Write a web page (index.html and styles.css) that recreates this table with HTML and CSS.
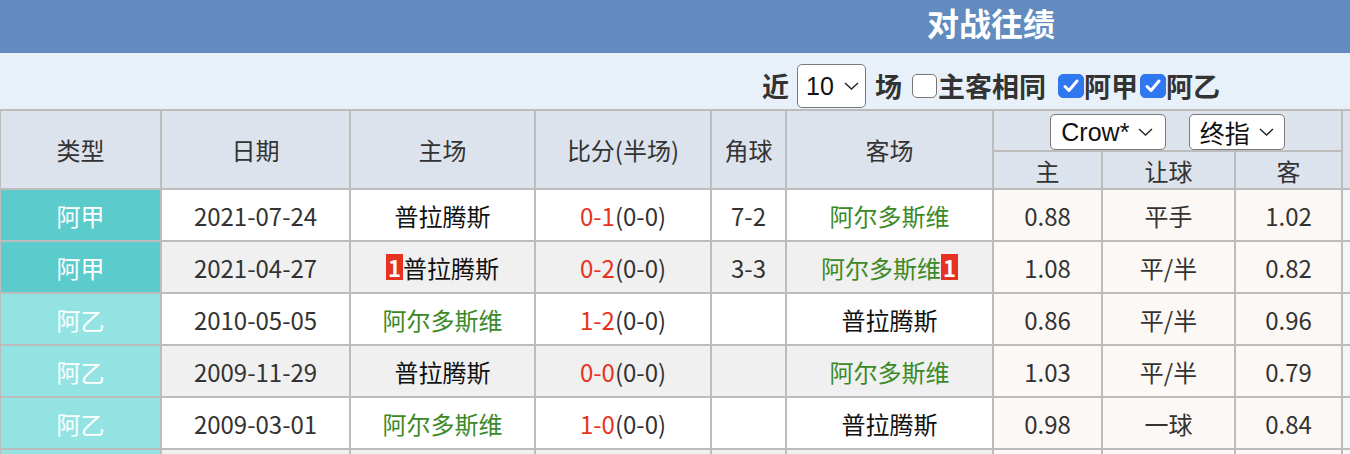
FILE: index.html
```html
<!DOCTYPE html>
<html lang="zh-CN">
<head>
<meta charset="utf-8">
<title>对战往绩</title>
<link rel="stylesheet" href="styles.css">
</head>
<body>
<div class="page">
  <div class="title-bar"><h2 class="title">对战往绩</h2></div>
  <div class="filter-bar">
    <span class="flabel">近</span>
    <span class="sel sel-count">10<svg class="chev" width="15" height="8" viewBox="0 0 15 8"><polyline points="1,1 7.5,7 14,1" fill="none" stroke="#222" stroke-width="1.4"/></svg></span>
    <span class="flabel gap-l">场</span>
    <span class="cb gap-cb"></span><span class="flabel">主客相同</span>
    <span class="cb checked gap-cb2"><svg width="18" height="16" viewBox="0 0 18 16"><polyline points="3,8.5 7,12.5 15,3" fill="none" stroke="#fff" stroke-width="3" stroke-linecap="round" stroke-linejoin="round"/></svg></span><span class="flabel">阿甲</span>
    <span class="cb checked gap-cb3"><svg width="18" height="16" viewBox="0 0 18 16"><polyline points="3,8.5 7,12.5 15,3" fill="none" stroke="#fff" stroke-width="3" stroke-linecap="round" stroke-linejoin="round"/></svg></span><span class="flabel">阿乙</span>
  </div>
  <table class="records">
    <colgroup>
      <col class="c-type"><col class="c-date"><col class="c-home"><col class="c-score"><col class="c-corner"><col class="c-away"><col class="c-o1"><col class="c-o2"><col class="c-o3"><col class="c-extra">
    </colgroup>
    <thead>
      <tr class="hr1">
        <th rowspan="2">类型</th>
        <th rowspan="2">日期</th>
        <th rowspan="2">主场</th>
        <th rowspan="2">比分(半场)</th>
        <th rowspan="2">角球</th>
        <th rowspan="2">客场</th>
        <th colspan="3" class="odds-sel">
          <span class="sel sel-co">Crow*<svg class="chev" width="15" height="8" viewBox="0 0 15 8"><polyline points="1,1 7.5,7 14,1" fill="none" stroke="#222" stroke-width="1.4"/></svg></span>
          <span class="sel sel-kind">终指<svg class="chev" width="15" height="8" viewBox="0 0 15 8"><polyline points="1,1 7.5,7 14,1" fill="none" stroke="#222" stroke-width="1.4"/></svg></span>
        </th>
        <th rowspan="2" class="extra"></th>
      </tr>
      <tr class="hr2">
        <th>主</th>
        <th>让球</th>
        <th>客</th>
      </tr>
    </thead>
    <tbody>
      <tr>
        <td class="type t-a">阿甲</td>
        <td>2021-07-24</td>
        <td class="team">普拉腾斯</td>
        <td><span class="red">0-1</span>(0-0)</td>
        <td>7-2</td>
        <td class="team green">阿尔多斯维</td>
        <td class="odds">0.88</td>
        <td class="odds">平手</td>
        <td class="odds">1.02</td>
        <td class="extra"></td>
      </tr>
      <tr class="alt">
        <td class="type t-a">阿甲</td>
        <td>2021-04-27</td>
        <td class="team"><span class="badge">1</span>普拉腾斯</td>
        <td><span class="red">0-2</span>(0-0)</td>
        <td>3-3</td>
        <td class="team green">阿尔多斯维<span class="badge">1</span></td>
        <td class="odds">1.08</td>
        <td class="odds">平/半</td>
        <td class="odds">0.82</td>
        <td class="extra"></td>
      </tr>
      <tr>
        <td class="type t-b">阿乙</td>
        <td>2010-05-05</td>
        <td class="team green">阿尔多斯维</td>
        <td><span class="red">1-2</span>(0-0)</td>
        <td></td>
        <td class="team">普拉腾斯</td>
        <td class="odds">0.86</td>
        <td class="odds">平/半</td>
        <td class="odds">0.96</td>
        <td class="extra"></td>
      </tr>
      <tr class="alt">
        <td class="type t-b">阿乙</td>
        <td>2009-11-29</td>
        <td class="team">普拉腾斯</td>
        <td><span class="red">0-0</span>(0-0)</td>
        <td></td>
        <td class="team green">阿尔多斯维</td>
        <td class="odds">1.03</td>
        <td class="odds">平/半</td>
        <td class="odds">0.79</td>
        <td class="extra"></td>
      </tr>
      <tr>
        <td class="type t-b">阿乙</td>
        <td>2009-03-01</td>
        <td class="team green">阿尔多斯维</td>
        <td><span class="red">1-0</span>(0-0)</td>
        <td></td>
        <td class="team">普拉腾斯</td>
        <td class="odds">0.98</td>
        <td class="odds">一球</td>
        <td class="odds">0.84</td>
        <td class="extra"></td>
      </tr>
      <tr class="alt">
        <td class="type t-b"></td>
        <td></td><td></td><td></td><td></td><td></td>
        <td class="odds"></td><td class="odds"></td><td class="odds"></td>
        <td class="extra"></td>
      </tr>
    </tbody>
  </table>
</div>
</body>
</html>
```

FILE: styles.css
```css
html, body {
  margin: 0;
  padding: 0;
  overflow: hidden;
  background: #ffffff;
}

body {
  font-family: "Noto Sans CJK SC", "Noto Sans", sans-serif;
  color: #333333;
}

.page {
  width: 1982px;
}

.title-bar {
  height: 53px;
  background: #628cc0;
  text-align: center;
}

.title {
  margin: 0;
  font-size: 32px;
  line-height: 44px;
  font-weight: bold;
  color: #ffffff;
}

.filter-bar {
  height: 56px;
  box-sizing: border-box;
  padding-top: 11px;
  background: #e8f0f9;
  display: flex;
  justify-content: center;
  align-items: flex-start;
}

.flabel {
  font-size: 27px;
  font-weight: bold;
  line-height: 44px;
  color: #333333;
}

.gap-l { margin-left: 9px; }
.gap-cb { margin-left: 10px; margin-right: 1px; }
.gap-cb2 { margin-left: 12px; }
.gap-cb3 { margin-left: 2px; }

.sel {
  display: inline-flex;
  align-items: center;
  box-sizing: border-box;
  background: #ffffff;
  border: 1.5px solid #7a7a7a;
  border-radius: 5px;
  color: #111111;
  font-family: "Liberation Sans", "Noto Sans CJK SC", sans-serif;
}

.sel-count {
  width: 69px;
  height: 44px;
  margin-left: 8px;
  padding-left: 8px;
  font-size: 25px;
}

.chev {
  margin-left: 10px;
}

.cb {
  display: inline-flex;
  align-items: center;
  justify-content: center;
  box-sizing: border-box;
  width: 25px;
  height: 24px;
  margin-top: 10px;
  border: 1.5px solid #767676;
  border-radius: 5px;
  background: #ffffff;
}

.cb.checked {
  background: #2f78f0;
  border-color: #2f78f0;
  width: 26px;
}

.records {
  border-collapse: collapse;
  table-layout: fixed;
  width: 1482px;
  margin-left: -1px;
}

.c-type { width: 161px; }
.c-date { width: 189px; }
.c-home { width: 185px; }
.c-score { width: 176px; }
.c-corner { width: 75px; }
.c-away { width: 207px; }
.c-o1 { width: 109px; }
.c-o2 { width: 133px; }
.c-o3 { width: 107px; }
.c-extra { width: 140px; }

.records th,
.records td {
  border: 2px solid #bcbcbc;
  padding: 0;
  text-align: center;
  vertical-align: middle;
  font-size: 24px;
  font-weight: normal;
  white-space: nowrap;
}

.records th {
  background: #dde3ec;
  color: #333333;
}

.hr1 { height: 41px; }
.hr2 { height: 38px; }

.records tbody tr { height: 52px; }

.records td {
  background: #ffffff;
  color: #333333;
}

.records tr.alt td {
  background: #f0f0f0;
}

.records td.type {
  color: #ffffff;
}

.records td.t-a,
.records tr.alt td.t-a { background: #5bcbcb; }
.records td.t-b,
.records tr.alt td.t-b { background: #94e3e3; }

.records td.odds,
.records tr.alt td.odds {
  background: #fcf8f5;
}

.records td.extra,
.records tr.alt td.extra {
  background: #f4f7fa;
}

.records td.team { color: #111111; }
.records td.green { color: #3b8a27; }

.red { color: #e8321f; }

.badge {
  display: inline-block;
  background: #e63222;
  color: #ffffff;
  font-weight: bold;
  font-size: 22px;
  line-height: 26px;
  padding: 0 2px;
  vertical-align: 1px;
}

.odds-sel {
  font-size: 0;
}

.sel-co,
.sel-kind {
  height: 36px;
  vertical-align: middle;
  font-size: 25px;
  padding-left: 10px;
}

.sel-co { width: 116px; }
.sel-kind { width: 96px; margin-left: 17px; }

.sel-kind .chev,
.sel-co .chev { margin-left: 9px; }
```
